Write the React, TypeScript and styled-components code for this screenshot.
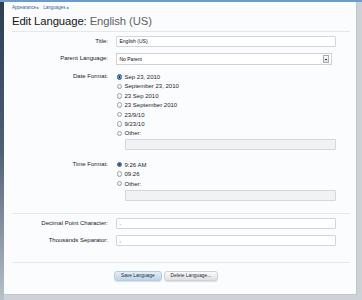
import React from 'react';
import styled, { createGlobalStyle } from 'styled-components';

const GlobalStyle = createGlobalStyle`
  html, body {
    margin: 0;
    padding: 0;
  }
  body {
    font-family: "Liberation Sans", Arial, sans-serif;
  }
`;

const Shell = styled.div`
  width: 362px;
  height: 300px;
  box-sizing: border-box;
  display: flex;
  border-top: 2px solid #6f9bc8;
  padding: 0 5px 5px 4px;
  background:
    linear-gradient(to bottom, #2c3d54, #4f6075 50%, #b9c0c9) left top / 4px 100% no-repeat,
    #cdd2d8;
`;

const Panel = styled.div`
  flex: 1;
  display: flex;
  flex-direction: column;
  background: #fbfcfe;
  border-right: 1px solid #bfc5cc;
  border-bottom: 1px solid #bfc5cc;
  padding: 3px 6px 0 8px;
`;

const Header = styled.div`
  border-bottom: 1px solid #e3e8ef;
  padding-bottom: 3px;
`;

const Crumbs = styled.div`
  display: flex;
  gap: 4px;
  font-size: 4.5px;
  line-height: 6px;
  color: #2f5e9c;
`;

const Crumb = styled.span`
  &::after {
    content: ' ▸';
    font-size: 3.5px;
  }
`;

const Title = styled.h1`
  margin: 4px 0 0;
  font-size: 11.3px;
  letter-spacing: -0.1px;
  line-height: 13px;
  font-weight: normal;
  color: #141414;
`;

const TitleSub = styled.span`
  color: #626262;
`;

const Section = styled.div<{ $top: number }>`
  display: flex;
  flex-direction: column;
  padding-top: ${(p) => p.$top}px;
`;

const Row = styled.div<{ $top?: number; $start?: boolean }>`
  display: grid;
  grid-template-columns: 96px 1fr;
  column-gap: 8px;
  align-items: ${(p) => (p.$start ? 'start' : 'center')};
  margin-top: ${(p) => p.$top ?? 0}px;
  padding-right: 14px;
`;

const Label = styled.label`
  text-align: right;
  font-size: 6px;
  line-height: 9.4px;
  color: #222;
`;

const TextBox = styled.div<{ $disabled?: boolean; $indent?: number; $top?: number }>`
  box-sizing: border-box;
  height: 11px;
  margin-left: ${(p) => p.$indent ?? 0}px;
  margin-top: ${(p) => p.$top ?? 0}px;
  padding: 0 2.5px;
  border: 1px solid #d3d6da;
  border-radius: 1px;
  background: ${(p) => (p.$disabled ? '#f1f2f3' : '#ffffff')};
  font-size: 5px;
  line-height: 9px;
  color: #111;
`;

const SelectBox = styled.div`
  box-sizing: border-box;
  height: 12px;
  margin-right: 4px;
  display: flex;
  align-items: center;
  justify-content: space-between;
  padding: 0 2px 0 2.5px;
  border: 1px solid #cfd2d6;
  background: #ffffff;
  font-size: 5px;
  color: #111;
`;

const SelectArrow = styled.span`
  box-sizing: border-box;
  width: 6px;
  height: 8px;
  border: 1px solid #a9adb2;
  background: linear-gradient(#fafafa, #dcdcdc);
  display: flex;
  align-items: center;
  justify-content: center;
  &::after {
    content: '';
    width: 2px;
    height: 1px;
    background: #333;
  }
`;

const Options = styled.div`
  display: flex;
  flex-direction: column;
`;

const Option = styled.div`
  display: flex;
  align-items: center;
  gap: 2.5px;
  height: 9.4px;
  font-size: 6px;
  color: #1c232d;
`;

const Radio = styled.span<{ $checked?: boolean }>`
  box-sizing: border-box;
  width: 5.5px;
  height: 5.5px;
  margin-left: 0.5px;
  border-radius: 50%;
  border: 1px solid ${(p) => (p.$checked ? '#2f5f9a' : '#9ea3a8')};
  background: ${(p) =>
    p.$checked
      ? 'radial-gradient(circle, #1d2f4a 0 0.9px, #6a9ad3 1.1px, #3f76bd 100%)'
      : 'linear-gradient(#ffffff, #e6e8ea)'};
`;

const Divider = styled.div<{ $top: number }>`
  height: 1px;
  margin-top: ${(p) => p.$top}px;
  background: #e2e7ee;
`;

const Buttons = styled.div`
  display: flex;
  gap: 2px;
  margin: 8.5px 0 0 102px;
`;

const Button = styled.button<{ $primary?: boolean }>`
  box-sizing: border-box;
  height: 9.5px;
  padding: 0 6px;
  border: 1px solid ${(p) => (p.$primary ? '#b6cbe0' : '#cfd1d5')};
  border-radius: 3px;
  background: ${(p) =>
    p.$primary ? 'linear-gradient(#e4eef8, #bcd4ea)' : 'linear-gradient(#fbfbfb, #dfe0e3)'};
  box-shadow: 0 1px 1px rgba(0, 0, 0, 0.12);
  font-family: "Liberation Sans", Arial, sans-serif;
  font-size: 4.8px;
  line-height: 7px;
  color: #1e2a38;
`;

const dateFormats = [
  'Sep 23, 2010',
  'September 23, 2010',
  '23 Sep 2010',
  '23 September 2010',
  '23/9/10',
  '9/23/10',
  'Other:',
];

const timeFormats = ['9:26 AM', '09:26', 'Other:'];

function RadioList({ items }: { items: string[] }) {
  return (
    <Options>
      {items.map((item, i) => (
        <Option key={item}>
          <Radio $checked={i === 0} />
          {item}
        </Option>
      ))}
    </Options>
  );
}

export default function App() {
  return (
    <Shell>
      <GlobalStyle />
      <Panel>
        <Header>
          <Crumbs>
            <Crumb>Appearance</Crumb>
            <Crumb>Languages</Crumb>
          </Crumbs>
          <Title>
            Edit Language: <TitleSub>English (US)</TitleSub>
          </Title>
        </Header>

        <Section $top={4}>
          <Row>
            <Label>Title:</Label>
            <TextBox>English (US)</TextBox>
          </Row>
          <Row $top={6}>
            <Label>Parent Language:</Label>
            <SelectBox>
              No Parent
              <SelectArrow />
            </SelectBox>
          </Row>
          <Row $top={7.3} $start>
            <Label>Date Format:</Label>
            <div>
              <RadioList items={dateFormats} />
              <TextBox $disabled $indent={9} $top={1} />
            </div>
          </Row>
          <Row $top={10} $start>
            <Label>Time Format:</Label>
            <div>
              <RadioList items={timeFormats} />
              <TextBox $disabled $indent={9} $top={1.5} />
            </div>
          </Row>
        </Section>

        <Divider $top={12} />

        <Section $top={4.5}>
          <Row>
            <Label>Decimal Point Character:</Label>
            <TextBox>.</TextBox>
          </Row>
          <Row $top={6}>
            <Label>Thousands Separator:</Label>
            <TextBox>,</TextBox>
          </Row>
        </Section>

        <Divider $top={15.5} />

        <Buttons>
          <Button $primary>Save Language</Button>
          <Button>Delete Language...</Button>
        </Buttons>
      </Panel>
    </Shell>
  );
}
